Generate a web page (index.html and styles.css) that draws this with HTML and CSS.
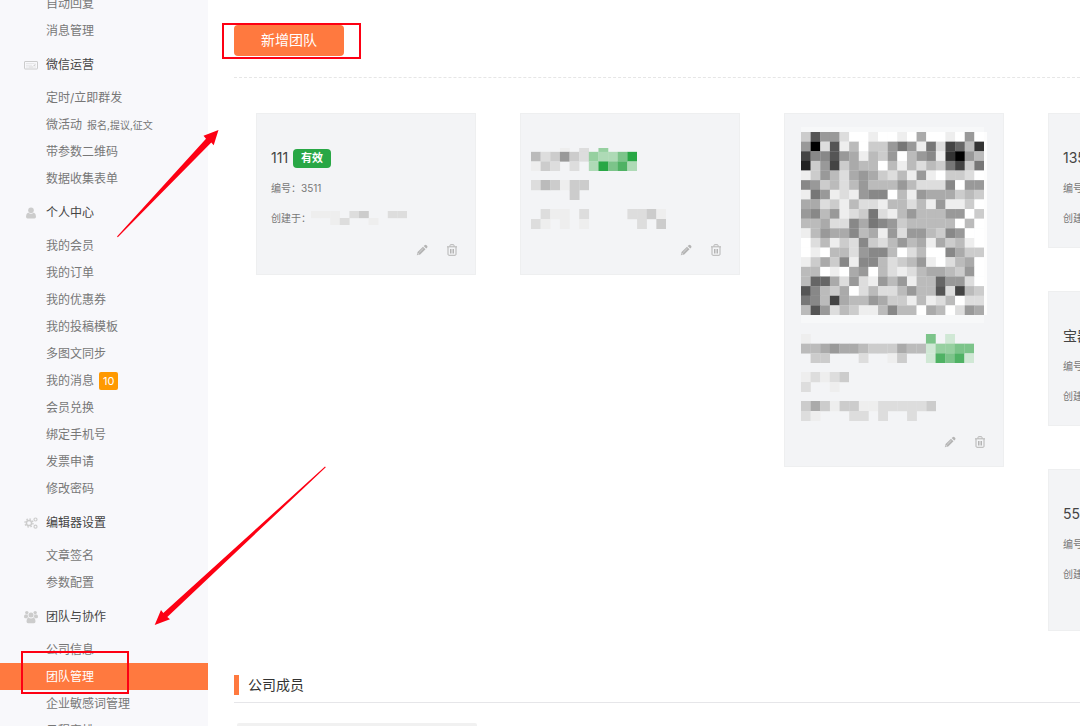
FILE: index.html
```html
<!DOCTYPE html>
<html lang="zh-CN">

<head>
    <meta charset="utf-8">
    <title>团队管理</title>
    <link rel="stylesheet" href="styles.css">
    <script src="mosaic.js" defer></script>
</head>

<body>
    <svg class="symbols" aria-hidden="true">
        <symbol id="pencil" viewBox="0 0 12 12">
            <path fill="currentColor" d="M8.600 1.200q1-.9 1.900 0l.6.600q.9.9 0 1.900l-.9.900-2.500-2.500zM7 2.800l2.500 2.500-5.300 5.200-3.400.8.8-3.300z" />
            <path fill="none" stroke="#f3f4f6" stroke-width=".5" d="M7.300 4.300L3.200 8.400" />
            <circle cx="2.200" cy="9.900" r=".6" fill="#f3f4f6" />
        </symbol>
        <symbol id="trash" viewBox="0 0 12 12">
            <path fill="none" stroke="currentColor" d="M1 2.800h10M4 2.500V1.300q0-.6.6-.6h2.800q.6 0 .6.600v1.200M2 3v7.300q0 1 1 1h6q1 0 1-1V3M4.500 5v4.500M6 5v4.500M7.500 5v4.500" />
        </symbol>
    </svg>

    <div class="page">
        <nav class="sidebar">
            <ul class="menu">
                <li><a href="#">自动回复</a></li>
                <li><a href="#">消息管理</a></li>
            </ul>
            <h2 class="group">
                <svg viewBox="0 0 14 14">
                    <rect x=".5" y="3.500" width="13" height="7.500" rx=".5" fill="none" stroke="currentColor" />
                    <path fill="none" stroke="currentColor" stroke-width=".8" d="M2.500 5.500h1m1 0h1m1 0h1m1 0h1m1.500 0v2h-1.500M2.500 7.300h1m1 0h1m1 0h1M2.500 9h1m1 0h5m1 0h1" />
                </svg>
                微信运营
            </h2>
            <ul class="menu">
                <li><a href="#">定时/立即群发</a></li>
                <li><a href="#">微活动 <small>报名,提议,征文</small></a></li>
                <li><a href="#">带参数二维码</a></li>
                <li><a href="#">数据收集表单</a></li>
            </ul>
            <h2 class="group">
                <svg viewBox="0 0 14 14">
                    <circle cx="7" cy="4.300" r="2.800" fill="currentColor" />
                    <path fill="currentColor" d="M4.200 6.500Q7 9 9.800 6.500q2.200.8 2.200 4 0 2-1.500 2h-7q-1.500 0-1.500-2 0-3.200 2.200-4z" />
                </svg>
                个人中心
            </h2>
            <ul class="menu">
                <li><a href="#">我的会员</a></li>
                <li><a href="#">我的订单</a></li>
                <li><a href="#">我的优惠券</a></li>
                <li><a href="#">我的投稿模板</a></li>
                <li><a href="#">多图文同步</a></li>
                <li><a href="#">我的消息 <span class="count">10</span></a></li>
                <li><a href="#">会员兑换</a></li>
                <li><a href="#">绑定手机号</a></li>
                <li><a href="#">发票申请</a></li>
                <li><a href="#">修改密码</a></li>
            </ul>
            <h2 class="group">
                <svg viewBox="0 0 14 14">
                    <g fill="none" stroke="currentColor">
                        <circle cx="5" cy="7" r="2.600" stroke-width="1.500" />
                        <circle cx="5" cy="7" r="4" stroke-width="1.400" stroke-dasharray="1.500 1.640" />
                        <circle cx="11.500" cy="3.500" r="1.500" stroke-width="1.200" />
                        <circle cx="11.500" cy="10.700" r="1.500" stroke-width="1.200" />
                    </g>
                </svg>
                编辑器设置
            </h2>
            <ul class="menu">
                <li><a href="#">文章签名</a></li>
                <li><a href="#">参数配置</a></li>
            </ul>
            <h2 class="group">
                <svg viewBox="0 0 14 14">
                    <g fill="currentColor">
                        <circle cx="2.800" cy="2.600" r="1.700" />
                        <circle cx="11.200" cy="2.600" r="1.700" />
                        <circle cx="7" cy="5" r="2.500" />
                        <path d="M1.200 4.500h2.600q-.3 1.700.7 2.800-1 0-1.700.9H1.500Q0 8.200 0 6.700q0-1.700 1.200-2.200zM12.800 4.500h-2.600q.3 1.700-.7 2.800 1 0 1.700.9h1.300q1.500 0 1.500-1.500 0-1.700-1.200-2.200zM4.500 7.500Q7 9.300 9.500 7.500q2 .6 2 3.800 0 1.900-1.500 1.900H4q-1.500 0-1.500-1.900 0-3.200 2-3.800z" />
                    </g>
                </svg>
                团队与协作
            </h2>
            <ul class="menu">
                <li><a href="#">公司信息</a></li>
                <li><a href="#" class="active">团队管理</a></li>
                <li><a href="#">企业敏感词管理</a></li>
                <li><a href="#">日程安排</a></li>
            </ul>
        </nav>

        <main class="content">
            <div class="toolbar">
                <button type="button" class="add">新增团队</button>
            </div>

            <div class="teams">
                <div class="column">
                    <article class="card">
                        <h3>111 <span class="status">有效</span></h3>
                        <p>编号：3511</p>
                        <p>创建于：<svg class="mosaic date" viewBox="0 0 10 2" preserveAspectRatio="none" data-rows="eee.dc..dd ..ed..e..."></svg></p>
                        <div class="actions">
                            <button type="button" aria-label="编辑"><svg><use href="#pencil" /></svg></button>
                            <button type="button" aria-label="删除"><svg><use href="#trash" /></svg></button>
                        </div>
                    </article>
                </div>

                <div class="column">
                    <article class="card masked">
                        <div class="lines">
                            <svg class="mosaic name" viewBox="0 0.6 11 2.4" preserveAspectRatio="none" data-rows="...e.d.j... bdc9cdjkkig ecd.d.kgihk"></svg>
                            <svg class="mosaic number" viewBox="0 0 6 2" preserveAspectRatio="none" data-rows="dbcecc ....c."></svg>
                            <svg class="mosaic created" viewBox="0 0 14 2" preserveAspectRatio="none" data-rows=".dee.d....ddce de.e.e.....d.c"></svg>
                        </div>
                        <div class="actions">
                            <button type="button" aria-label="编辑"><svg><use href="#pencil" /></svg></button>
                            <button type="button" aria-label="删除"><svg><use href="#trash" /></svg></button>
                        </div>
                    </article>
                </div>

                <div class="column">
                    <article class="card masked with-code">
                        <svg class="mosaic code" viewBox="0 0 19 19" preserveAspectRatio="none" data-rows="c599dffeffefaffef9f 90d5ebfcc979e7d46b3 48859aebc9fb98e309b 2c94cabbfbebdbc74c7 ec9bda9acdbe9efccdf 89cbdb9bbb9bddd8f99 e79ede988fbe9aaacbc aadcebddebbdbe9eecf 98b9edc7deb9bbb99fc bbadd8a789cbbbbbfbf eb9aa8bae9d99bc89ff fdbecd8cdb9baeacbef fefbbd988bfdbff8acc ecac8e88bdcb9efdbaf bbfefa9fbdedbaabc9f b66ad9de9b9ebb699df 58bcafdbddb9bb5d4bc 78b4abb9accebedbfdd b59dbceeb8bbfabfd9a"></svg>
                        <div class="lines">
                            <svg class="mosaic long-name" viewBox="0 0 18 3" preserveAspectRatio="none" data-rows="e............i.l.. bba9aabcccabbljjii .cc...d..ec..lhihl"></svg>
                            <svg class="mosaic short" viewBox="0 0 5 2" preserveAspectRatio="none" data-rows="ededc d..e."></svg>
                            <svg class="mosaic created" viewBox="0 0 14 2" preserveAspectRatio="none" data-rows="cacecceedddddc de...dd.d..d.."></svg>
                        </div>
                        <div class="actions">
                            <button type="button" aria-label="编辑"><svg><use href="#pencil" /></svg></button>
                            <button type="button" aria-label="删除"><svg><use href="#trash" /></svg></button>
                        </div>
                    </article>
                </div>

                <div class="column">
                    <article class="card">
                        <h3>135</h3>
                        <p>编号：</p>
                        <p>创建于：</p>
                    </article>
                    <article class="card">
                        <h3>宝器</h3>
                        <p>编号：</p>
                        <p>创建于：</p>
                    </article>
                    <article class="card">
                        <h3>555</h3>
                        <p>编号：</p>
                        <p>创建于：</p>
                        <div class="actions"></div>
                    </article>
                </div>
            </div>

            <h2 class="section-title">公司成员</h2>
            <div class="members"></div>
        </main>
    </div>

    <svg class="marks" viewBox="0 0 1080 726" aria-hidden="true">
        <g fill="none" stroke="#fd0013" stroke-width="2">
            <rect x="223" y="24" width="137" height="34" />
            <rect x="22" y="652" width="106" height="41" />
        </g>
        <path fill="#fd0013" d="M218.500 130l-15 5.700 2.500 3L117 236.500l.8.700 93.500-94.700 2.400 2.700z" />
        <path fill="#fd0013" d="M154.700 625l6.300-15 2.300 3L325 466.500l.8.800L167.300 617l2.700 2.300z" />
    </svg>
</body>

</html>
```

FILE: styles.css
```css
* {
    margin: 0;
    padding: 0;
    box-sizing: border-box;
}

body {
    overflow: hidden;
    background-color: #fff;
    color: #333;
    font: 12px/20px Inter, "Noto Sans CJK SC", sans-serif;
}

.symbols {
    display: none;
}

.page {
    display: flex;
    height: 100vh;
    overflow: hidden;
}

/* sidebar */
.sidebar {
    flex: none;
    width: 208px;
    margin-top: -10px;
    background-color: #f8f8fb;
}

.menu {
    list-style: none;
}

.menu a {
    display: flex;
    align-items: center;
    gap: 5px;
    height: 27px;
    padding-top: 1px;
    padding-left: 46px;
    color: #777;
    text-decoration: none;
    white-space: nowrap;
}

.menu a.active {
    background-color: #ff793f;
    color: #fff;
}

.menu small {
    font-size: 10px;
}

.count {
    padding: 0 4px;
    border-radius: 2px;
    background-color: #ff9900;
    color: #fff;
    font-size: 11px;
    line-height: 18px;
}

.group {
    display: flex;
    align-items: center;
    gap: 8px;
    height: 40px;
    padding-top: 1px;
    padding-left: 24px;
    color: #444;
    font-size: 12px;
    font-weight: normal;
}

.group svg {
    width: 14px;
    height: 14px;
    color: #ccc;
}

/* content */
.content {
    flex: 1;
    min-width: 0;
    padding: 25px 0 0 26px;
    overflow: hidden;
}

.toolbar {
    padding-bottom: 21px;
    border-bottom: 1px dashed #e6e6e6;
}

button {
    border: none;
    background: none;
    font: inherit;
    cursor: pointer;
}

.add {
    display: block;
    padding: 0 27px 2px;
    border-radius: 4px;
    background-color: #ff793f;
    color: #fff;
    font-size: 14px;
    line-height: 29px;
}

.teams {
    display: grid;
    grid-template-columns: repeat(4, 220px);
    align-items: start;
    gap: 44px;
    padding: 35px 22px 44px;
}

.column {
    display: grid;
    gap: 43px;
}

.card {
    padding: 29px 15px 14px 14px;
    border: 1px solid #eeeff0;
    background-color: #f3f4f6;
    color: #777;
    font-size: 10px;
}

.card h3 {
    display: flex;
    align-items: center;
    gap: 5px;
    height: 30px;
    color: #444;
    font-size: 14px;
    font-weight: normal;
}

.card p {
    display: flex;
    align-items: center;
    height: 30px;
    white-space: nowrap;
}

.status {
    padding: 0 8px;
    border-radius: 4px;
    background-color: #28a745;
    color: #fff;
    font-size: 11px;
    font-weight: bold;
    line-height: 19px;
}

.actions {
    display: flex;
    justify-content: flex-end;
    gap: 18px;
    height: 27px;
    padding: 11px 2px 0 0;
}

.actions button,
.actions svg {
    display: block;
    width: 12px;
    height: 12px;
    color: #b4b4b4;
}

/* masked cards */
.masked {
    padding-left: 10px;
}

.with-code {
    padding-top: 18px;
    padding-left: 16px;
}

.lines {
    display: grid;
    gap: 9px;
    padding: 5px 0 4px;
}

.mosaic {
    display: block;
    height: 20px;
}

.mosaic.date {
    width: 96px;
    height: 14px;
}

.mosaic.name {
    width: 106px;
    height: 23px;
}

.mosaic.number {
    width: 58px;
}

.mosaic.short {
    width: 48px;
}

.mosaic.created {
    width: 135px;
}

.mosaic.long-name {
    width: 173px;
    height: 29px;
}

.mosaic.code {
    width: 183px;
    height: 183px;
    margin-bottom: 14px;
    box-shadow: 3px 0 #fdfdfd, 0 -5px #f7f8f9, 0 8px #f7f8f9;
}

/* members */
.section-title {
    padding-bottom: 7px;
    border-bottom: 1px solid #e6e6e9;
    font-size: 14px;
    font-weight: normal;
    line-height: 20px;
}

.section-title::before {
    content: "";
    float: left;
    width: 5px;
    height: 20px;
    margin-right: 9px;
    background-color: #ff793f;
}

.members {
    width: 240px;
    height: 40px;
    margin: 20px 0 0 3px;
    border-radius: 2px;
    background-color: #f1f1f1;
}

/* red marks over the page */
.marks {
    position: absolute;
    top: 0;
    left: 0;
    width: 1080px;
    height: 726px;
    pointer-events: none;
}
```

FILE: mosaic.js
```js
// hex digits are greys, g - l are greens, a dot is an empty cell
let greens = {
    g: "#28a745",
    h: "#4fb264",
    i: "#7cc48a",
    j: "#96d0a0",
    k: "#aedab6",
    l: "#d0e8d5"
};

let mosaics = document.querySelectorAll(".mosaic");

for (let svg of mosaics) {
    let rows = svg.dataset.rows.split(" ");
    for (let y = 0; y < rows.length; y++) {
        for (let x = 0; x < rows[y].length; x++) {
            let key = rows[y][x];
            if (key == ".") {
                continue;
            }
            let rect = document.createElementNS("http://www.w3.org/2000/svg", "rect");
            rect.setAttribute("x", x);
            rect.setAttribute("y", y);
            rect.setAttribute("width", 1.02);
            rect.setAttribute("height", 1.02);
            rect.setAttribute("fill", greens[key] || "#" + key + key + key);
            svg.appendChild(rect);
        }
    }
}
```
